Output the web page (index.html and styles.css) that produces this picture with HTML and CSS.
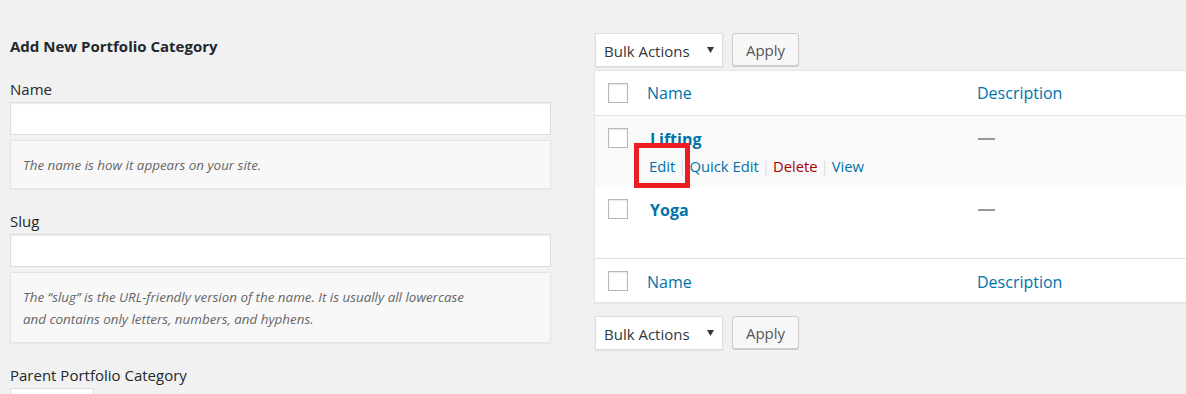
FILE: index.html
```html
<!DOCTYPE html>
<html lang="en">

<head>
  <meta charset="UTF-8">
  <meta name="viewport" content="width=device-width, initial-scale=1.0">
  <title>Portfolio Categories</title>
  <link rel="stylesheet" href="styles.css">
</head>

<body>
  <div class="wrap">
    <div class="col-left">
      <h2 class="form-title">Add New Portfolio Category</h2>

      <div class="form-field">
        <label class="field-label">Name</label>
        <input class="field-input" type="text">
        <p class="field-desc">The name is how it appears on your site.</p>
      </div>

      <div class="form-field">
        <label class="field-label">Slug</label>
        <input class="field-input" type="text">
        <p class="field-desc">The &ldquo;slug&rdquo; is the URL-friendly version of the name. It is usually all lowercase and contains only letters, numbers, and hyphens.</p>
      </div>

      <div class="form-field">
        <label class="field-label">Parent Portfolio Category</label>
        <div class="parent-select"></div>
      </div>
    </div>

    <div class="col-right">
      <div class="tablenav">
        <div class="bulk-select">
          <span>Bulk Actions</span>
          <svg class="caret" width="7" height="6" viewBox="0 0 7 6"><path d="M0 0h7L3.5 6z" fill="#32373c"/></svg>
        </div>
        <span class="btn">Apply</span>
      </div>

      <div class="terms">
        <div class="row row-head">
          <div class="cell-cb"><span class="cb"></span></div>
          <div class="cell-name"><a class="col-link">Name</a></div>
          <div class="cell-desc"><a class="col-link">Description</a></div>
        </div>
        <div class="row row-item alt">
          <div class="cell-cb"><span class="cb"></span></div>
          <div class="cell-name">
            <a class="term-title">Lifting</a>
            <div class="row-actions">
              <a class="act">Edit</a><span class="sep">|</span><a class="act">Quick Edit</a><span class="sep">|</span><a class="act del">Delete</a><span class="sep">|</span><a class="act">View</a>
            </div>
            <span class="highlight"></span>
          </div>
          <div class="cell-desc"><span class="dash"></span></div>
        </div>
        <div class="row row-item">
          <div class="cell-cb"><span class="cb"></span></div>
          <div class="cell-name"><a class="term-title">Yoga</a></div>
          <div class="cell-desc"><span class="dash"></span></div>
        </div>
        <div class="row row-foot">
          <div class="cell-cb"><span class="cb"></span></div>
          <div class="cell-name"><a class="col-link">Name</a></div>
          <div class="cell-desc"><a class="col-link">Description</a></div>
        </div>
      </div>

      <div class="tablenav tablenav-bottom">
        <div class="bulk-select">
          <span>Bulk Actions</span>
          <svg class="caret" width="7" height="6" viewBox="0 0 7 6"><path d="M0 0h7L3.5 6z" fill="#32373c"/></svg>
        </div>
        <span class="btn">Apply</span>
      </div>
    </div>
  </div>
</body>

</html>
```
FILE: styles.css
```css
* {
  margin: 0;
  padding: 0;
  box-sizing: border-box;
}

html,
body {
  height: 100%;
}

body {
  background-color: #f1f1f1;
  font-family: "Open Sans", "Noto Sans", sans-serif;
  font-size: 15px;
  color: #23282d;
  overflow: hidden;
}

a {
  color: #0073aa;
  text-decoration: none;
}

.wrap {
  display: flex;
  gap: 43px;
  padding: 33px 0 0 10px;
}

/* 左侧表单 */
.col-left {
  flex: none;
  width: 541px;
}

.form-title {
  font-size: 15px;
  font-weight: 700;
  line-height: 24px;
  margin-top: 1px;
}

.form-field {
  margin-top: 22px;
}

.form-title + .form-field {
  margin-top: 21px;
}

.field-label {
  display: block;
  line-height: 20px;
  font-size: 15px;
  color: #23282d;
}

.field-input {
  display: block;
  width: 100%;
  height: 33px;
  margin-top: 3px;
  border: 1px solid #ddd;
  background-color: #fff;
  box-shadow: inset 0 1px 2px rgba(0, 0, 0, .07);
  outline: none;
}

.field-desc {
  margin-top: 5px;
  padding: 13px 60px 12px 12px;
  background-color: #f8f8f8;
  border: 1px solid #e4e4e4;
  box-shadow: 0 1px 1px rgba(0, 0, 0, .03);
  font-size: 13.4px;
  font-style: italic;
  line-height: 22px;
  color: #666;
}

.parent-select {
  width: 84px;
  height: 30px;
  margin-top: 3px;
  background-color: #fff;
  border: 1px solid #ddd;
}

/* 右侧列表 */
.col-right {
  flex: none;
  width: 640px;
}

.tablenav {
  display: flex;
  gap: 9px;
  height: 34px;
  padding-left: 1px;
}

.tablenav-bottom {
  margin-top: 13px;
}

.bulk-select {
  display: flex;
  align-items: center;
  justify-content: space-between;
  width: 128px;
  height: 34px;
  padding: 1px 8px 0 8px;
  background-color: #fff;
  border: 1px solid #ddd;
  box-shadow: 0 1px 2px rgba(0, 0, 0, .07);
  font-size: 15px;
  color: #32373c;
}

.caret {
  margin-top: -2px;
}

.btn {
  display: flex;
  align-items: center;
  justify-content: center;
  width: 67px;
  height: 33px;
  padding-top: 1px;
  background-color: #f7f7f7;
  border: 1px solid #ccc;
  border-radius: 3px;
  box-shadow: 0 1px 0 #ccc;
  font-size: 15px;
  color: #555;
}

.terms {
  margin-top: 3px;
  background-color: #fff;
  border: 1px solid #e5e5e5;
  box-shadow: 0 1px 1px rgba(0, 0, 0, .04);
}

.row {
  display: grid;
  grid-template-columns: 52px 330px 1fr;
}

.row-head {
  height: 45px;
  border-bottom: 1px solid #e1e1e1;
}

.row-foot {
  height: 44px;
  border-top: 1px solid #e1e1e1;
}

.row-item {
  height: 71px;
}

.row-item.alt {
  background-color: #f9f9f9;
}

.cell-cb {
  padding: 12px 0 0 13px;
}

.cb {
  display: block;
  width: 20px;
  height: 20px;
  background-color: #fff;
  border: 1px solid #b4b9be;
  box-shadow: inset 0 1px 2px rgba(0, 0, 0, .1);
}

.row-head .cell-name,
.row-foot .cell-name,
.row-head .cell-desc,
.row-foot .cell-desc {
  padding-top: 11px;
  line-height: 22px;
  font-size: 16px;
}

.row-foot .cell-name,
.row-foot .cell-desc {
  padding-top: 12px;
}

.row-item .cell-name {
  position: relative;
  padding: 12px 0 0 3px;
}

.term-title {
  display: block;
  font-size: 16px;
  font-weight: 700;
  line-height: 22px;
}

.row-actions {
  margin-top: 5px;
  margin-left: -1px;
  font-size: 14.8px;
  line-height: 22px;
  white-space: nowrap;
}

.sep {
  margin: 0 3px;
  color: #ddd;
}

.act {
  color: #0073aa;
}

.act.del {
  color: #a00;
}

.row-item .cell-desc {
  padding: 22px 0 0 1px;
}

.dash {
  display: block;
  width: 17px;
  height: 2px;
  background-color: #555;
  transform: scaleY(.6);
}

/* 截图标注框 */
.highlight {
  position: absolute;
  left: -13px;
  top: 27px;
  width: 56px;
  height: 45px;
  border: 5px solid #ed1c24;
}
```
